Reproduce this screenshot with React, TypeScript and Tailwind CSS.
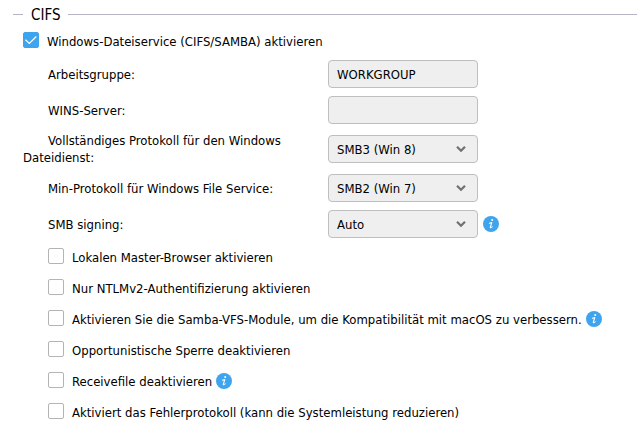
import { ReactNode } from 'react';

const fieldClass =
    'block h-7 w-[150px] appearance-none rounded border border-[#bfbfbf] bg-[#efefef] px-2 text-[13px] text-black outline-none';

const checkboxes = [
    { id: 'master-browser', label: 'Lokalen Master-Browser aktivieren', info: false },
    { id: 'ntlmv2', label: 'Nur NTLMv2-Authentifizierung aktivieren', info: false },
    { id: 'samba-vfs', label: 'Aktivieren Sie die Samba-VFS-Module, um die Kompatibilität mit macOS zu verbessern.', info: true },
    { id: 'oplocks', label: 'Opportunistische Sperre deaktivieren', info: false },
    { id: 'receivefile', label: 'Receivefile deaktivieren', info: true },
    { id: 'error-log', label: 'Aktiviert das Fehlerprotokoll (kann die Systemleistung reduzieren)', info: false },
];

function InfoIcon() {
    return (
        <svg viewBox="0 0 16 16" className="h-4 w-4 shrink-0" aria-hidden="true">
            <circle cx="8" cy="8" r="8" fill="#3fa4ee" />
            <circle cx="9.2" cy="4.1" r="1" fill="#fff" />
            <path d="M6.4 7.3 8.8 6.6 7.3 11.2Q7.1 12.3 9.2 10.9" fill="none" stroke="#fff" strokeWidth="1.1" strokeLinecap="round" strokeLinejoin="round" />
        </svg>
    );
}

function Checkbox({ id, label, checked = false, info = false }: { id: string; label: string; checked?: boolean; info?: boolean }) {
    return (
        <div className="flex h-4 items-center">
            <span className="grid h-4 w-4 shrink-0">
                <input
                    id={id}
                    type="checkbox"
                    defaultChecked={checked}
                    className="peer col-start-1 row-start-1 h-4 w-4 appearance-none rounded-xs border border-[#b4b4b4] bg-white checked:border-[#3fa4ee] checked:bg-[#3fa4ee]"
                />
                <svg viewBox="0 0 16 16" className="pointer-events-none col-start-1 row-start-1 hidden h-4 w-4 peer-checked:block" aria-hidden="true">
                    <path d="M2.5 7.8 6.3 11.5 13.3 4.5" fill="none" stroke="#fff" strokeWidth="1.2" />
                </svg>
            </span>
            <label htmlFor={id} className="pt-0.5 pl-2 whitespace-nowrap">{label}</label>
            {info && <span className="pt-0.5 pl-1"><InfoIcon /></span>}
        </div>
    );
}

function Row({ id, label, children }: { id: string; label: string; children: ReactNode }) {
    return (
        <div className="flex items-center">
            <label htmlFor={id} className="w-[305px] shrink-0 pr-8 indent-[25px]">{label}</label>
            {children}
        </div>
    );
}

function Select({ id, options }: { id: string; options: string[] }) {
    return (
        <span className="grid items-center">
            <select id={id} className={`${fieldClass} col-start-1 row-start-1`}>
                {options.map((option) => <option key={option}>{option}</option>)}
            </select>
            <svg viewBox="0 0 10 8" className="pointer-events-none col-start-1 row-start-1 mr-3 h-2 w-2.5 justify-self-end" aria-hidden="true">
                <path d="M1 1.8 5 5.8 9 1.8" fill="none" stroke="#707070" strokeWidth="2.2" />
            </svg>
        </span>
    );
}

export default function App() {
    return (
        <main className="min-h-screen bg-white font-['DejaVu_Sans_Condensed','Open_Sans',sans-serif] text-[13px] leading-[17px] text-black">
            <div className="flex items-center gap-2 pt-[3px] pl-[13px]">
                <span className="h-px w-2.5 bg-[#b5b5c5]" />
                <h2 className="pt-0.5 text-[15px] leading-5">CIFS</h2>
                <span className="h-px flex-1 bg-[#b5b5c5]" />
            </div>

            <form className="pt-[7px] pl-[23px]">
                <Checkbox id="cifs" label="Windows-Dateiservice (CIFS/SAMBA) aktivieren" checked />

                <div className="flex flex-col gap-2 pt-3">
                    <Row id="workgroup" label="Arbeitsgruppe:">
                        <input id="workgroup" type="text" defaultValue="WORKGROUP" className={fieldClass} />
                    </Row>
                    <Row id="wins" label="WINS-Server:">
                        <input id="wins" type="text" className={fieldClass} />
                    </Row>
                    <Row id="max-protocol" label="Vollständiges Protokoll für den Windows Dateidienst:">
                        <Select id="max-protocol" options={['SMB3 (Win 8)']} />
                    </Row>
                    <Row id="min-protocol" label="Min-Protokoll für Windows File Service:">
                        <Select id="min-protocol" options={['SMB2 (Win 7)']} />
                    </Row>
                    <Row id="signing" label="SMB signing:">
                        <Select id="signing" options={['Auto']} />
                        <span className="pl-[5px]"><InfoIcon /></span>
                    </Row>
                </div>

                <div className="flex flex-col gap-[15px] pt-[10px] pl-[25px]">
                    {checkboxes.map((item) => (
                        <Checkbox key={item.id} id={item.id} label={item.label} info={item.info} />
                    ))}
                </div>
            </form>
        </main>
    );
}
